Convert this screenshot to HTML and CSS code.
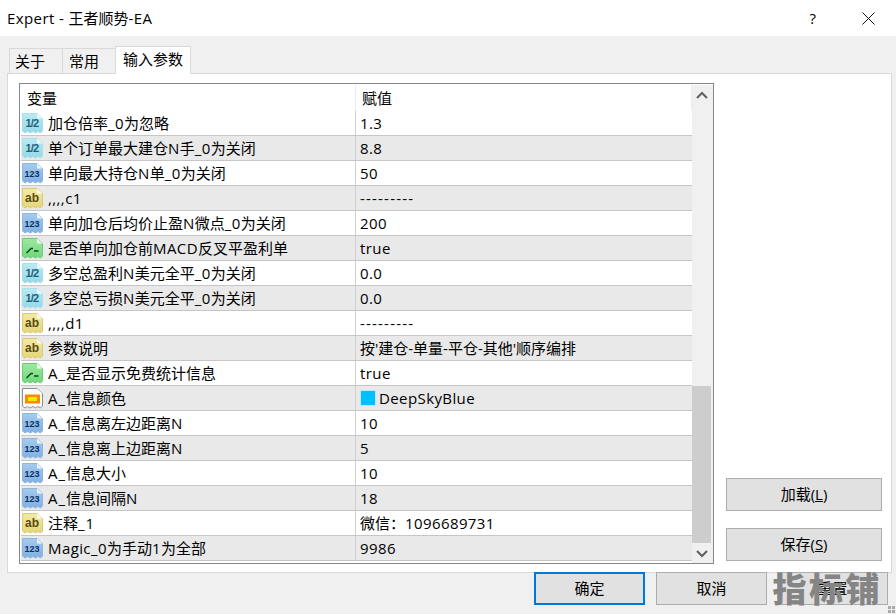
FILE: index.html
```html
<!DOCTYPE html>
<html lang="zh">
<head>
<meta charset="utf-8">
<title>Expert - 王者顺势-EA</title>
<link rel="stylesheet" href="styles.css">
</head>
<body>
<svg class="defs" width="0" height="0" aria-hidden="true">
  <defs>
    <linearGradient id="g-half" x1="0" y1="0" x2="0" y2="1"><stop offset="0" stop-color="#b9ebf3"/><stop offset="1" stop-color="#93d9e8"/></linearGradient>
    <linearGradient id="g-num" x1="0" y1="0" x2="0" y2="1"><stop offset="0" stop-color="#a5cbee"/><stop offset="1" stop-color="#7fb0e2"/></linearGradient>
    <linearGradient id="g-str" x1="0" y1="0" x2="0" y2="1"><stop offset="0" stop-color="#f3eaa4"/><stop offset="1" stop-color="#e4d67a"/></linearGradient>
    <linearGradient id="g-bool" x1="0" y1="0" x2="0" y2="1"><stop offset="0" stop-color="#9ee8a2"/><stop offset="1" stop-color="#6fd87a"/></linearGradient>
    <symbol id="doc" viewBox="0 0 21 21">
      <path class="doc-body" d="M.5.5H15L20.500 5.500V18L18.500 20L16 18.500L13.500 20L11 18.500L8 20L5.500 18.500L3 20L.5 18Z"/>
      <path class="doc-fold" d="M15 .5V5.500H20.500Z"/>
    </symbol>
  </defs>
</svg>
<div class="dialog">
  <header class="titlebar">
    <span class="title"><span class="en">Expert - </span>王者顺势<span class="en">-EA</span></span>
    <span class="help">?</span>
    <svg class="close" width="13" height="13" viewBox="0 0 13 13"><path d="M.5.500L12.500 12.500M12.500.500L.5 12.500"/></svg>
  </header>
  <div class="main">
    <nav class="tabs">
      <span class="tab">关于</span>
      <span class="tab">常用</span>
      <span class="tab active">输入参数</span>
    </nav>
    <section class="panel">
      <div class="list">
        <div class="table">
          <div class="row head"><span class="cell name">变量</span><span class="cell value">赋值</span></div>

          <div class="row"><span class="cell name"><span class="ic half"><svg><use href="#doc"/></svg><b>1/2</b></span>加仓倍率<span class="en">_0</span>为忽略</span><span class="cell value en">1.3</span></div>
          <div class="row alt"><span class="cell name"><span class="ic half"><svg><use href="#doc"/></svg><b>1/2</b></span>单个订单最大建仓<span class="en">N</span>手<span class="en">_0</span>为关闭</span><span class="cell value en">8.8</span></div>
          <div class="row"><span class="cell name"><span class="ic num"><svg><use href="#doc"/></svg><b>123</b></span>单向最大持仓<span class="en">N</span>单<span class="en">_0</span>为关闭</span><span class="cell value en">50</span></div>
          <div class="row alt"><span class="cell name"><span class="ic str"><svg><use href="#doc"/></svg><b>ab</b></span><span class="en">,,,,c1</span></span><span class="cell value dash">---------</span></div>
          <div class="row"><span class="cell name"><span class="ic num"><svg><use href="#doc"/></svg><b>123</b></span>单向加仓后均价止盈<span class="en">N</span>微点<span class="en">_0</span>为关闭</span><span class="cell value en">200</span></div>
          <div class="row alt"><span class="cell name"><span class="ic bool"><svg><use href="#doc"/><path class="sig" d="M4.500 15L9 10.500H11M12 13H16.500"/></svg></span>是否单向加仓前<span class="en">MACD</span>反叉平盈利单</span><span class="cell value en">true</span></div>
          <div class="row"><span class="cell name"><span class="ic half"><svg><use href="#doc"/></svg><b>1/2</b></span>多空总盈利<span class="en">N</span>美元全平<span class="en">_0</span>为关闭</span><span class="cell value en">0.0</span></div>
          <div class="row alt"><span class="cell name"><span class="ic half"><svg><use href="#doc"/></svg><b>1/2</b></span>多空总亏损<span class="en">N</span>美元全平<span class="en">_0</span>为关闭</span><span class="cell value en">0.0</span></div>
          <div class="row"><span class="cell name"><span class="ic str"><svg><use href="#doc"/></svg><b>ab</b></span><span class="en">,,,,d1</span></span><span class="cell value dash">---------</span></div>
          <div class="row alt"><span class="cell name"><span class="ic str"><svg><use href="#doc"/></svg><b>ab</b></span>参数说明</span><span class="cell value">按'建仓-单量-平仓-其他'顺序编排</span></div>
          <div class="row"><span class="cell name"><span class="ic bool"><svg><use href="#doc"/><path class="sig" d="M4.500 15L9 10.500H11M12 13H16.500"/></svg></span><span class="en-a">A_</span>是否显示免费统计信息</span><span class="cell value en">true</span></div>
          <div class="row alt"><span class="cell name"><span class="ic color"><svg><use href="#doc"/><rect class="grad-o" x="3" y="6.500" width="15" height="9"/><rect class="grad-y" x="6" y="9" width="9" height="4"/></svg></span><span class="en-a">A_</span>信息颜色</span><span class="cell value en"><i class="swatch"></i>DeepSkyBlue</span></div>
          <div class="row"><span class="cell name"><span class="ic num"><svg><use href="#doc"/></svg><b>123</b></span><span class="en-a">A_</span>信息离左边距离<span class="en">N</span></span><span class="cell value en">10</span></div>
          <div class="row alt"><span class="cell name"><span class="ic num"><svg><use href="#doc"/></svg><b>123</b></span><span class="en-a">A_</span>信息离上边距离<span class="en">N</span></span><span class="cell value en">5</span></div>
          <div class="row"><span class="cell name"><span class="ic num"><svg><use href="#doc"/></svg><b>123</b></span><span class="en-a">A_</span>信息大小</span><span class="cell value en">10</span></div>
          <div class="row alt"><span class="cell name"><span class="ic num"><svg><use href="#doc"/></svg><b>123</b></span><span class="en-a">A_</span>信息间隔<span class="en">N</span></span><span class="cell value en">18</span></div>
          <div class="row"><span class="cell name"><span class="ic str"><svg><use href="#doc"/></svg><b>ab</b></span>注释<span class="en-a">_1</span></span><span class="cell value">微信：<span class="en">1096689731</span></span></div>
          <div class="row alt"><span class="cell name"><span class="ic num"><svg><use href="#doc"/></svg><b>123</b></span><span class="en">Magic_0</span>为手动<span class="en">1</span>为全部</span><span class="cell value en">9986</span></div>
        </div>
        <div class="scrollbar">
          <svg class="arrow" width="20" height="20" viewBox="0 0 20 20"><path d="M5 13L10 8L15 13"/></svg>
          <div class="track"><div class="thumb"></div></div>
          <svg class="arrow" width="20" height="20" viewBox="0 0 20 20"><path d="M5 8L10 13L15 8"/></svg>
        </div>
      </div>
      <div class="side">
        <button class="btn wide">加载(<u>L</u>)</button>
        <button class="btn wide">保存(<u>S</u>)</button>
      </div>
    </section>
    <footer class="footer">
      <button class="btn foot primary">确定</button>
      <button class="btn foot">取消</button>
      <button class="btn foot">重置</button>
      <span class="watermark">指标铺</span>
      <span class="grip"></span>
    </footer>
  </div>
</div>
</body>
</html>
```

FILE: styles.css
```css
* { box-sizing: border-box; }
html, body { margin: 0; padding: 0; }
body {
  width: 896px;
  height: 614px;
  overflow: hidden;
  font-family: "Open Sans", "Noto Sans CJK SC", sans-serif;
  font-size: 15px;
  color: #000;
  background: #f0f0f0;
}
.defs { position: absolute; }
.dialog { display: flex; flex-direction: column; height: 614px; }
.en { letter-spacing: .4px; }
.en-a { letter-spacing: 1px; }
.dash { letter-spacing: 1.2px; }

.titlebar {
  height: 36px;
  flex: none;
  background: #fff;
  display: flex;
  align-items: center;
  padding: 0 21px 0 7px;
}
.title { font-size: 15px; line-height: 36px; flex: 1; }
.help { font-size: 15px; margin-right: 46px; }
.close { stroke: #111; stroke-width: 1; fill: none; }

.main { flex: 1; display: flex; flex-direction: column; padding: 0 4px 0 7px; position: relative; }

.tabs { display: flex; height: 37px; padding: 10px 0 0 2px; align-items: flex-end; flex: none; }
.tab {
  height: 25px;
  line-height: 24px;
  padding: 0 6px;
  background: #f0f0f0;
  border: 1px solid #d9d9d9;
  border-bottom: 0;
  margin-right: -1px;
  width: 54px;
}
.tab:first-child { padding-left: 5px; }
.tab.active {
  height: 28px;
  line-height: 25px;
  width: 76px;
  background: #fff;
  margin-bottom: -1px;
  position: relative;
  z-index: 1;
  padding: 0 7px;
}

.panel {
  height: 500px;
  flex: none;
  background: #fff;
  border: 1px solid #d9d9d9;
  display: flex;
  padding: 9px 9px 0 11px;
}

.list {
  width: 695px;
  height: 481px;
  flex: none;
  border: 1px solid #828790;
  display: flex;
  padding: 1px 0 0 1px;
}
.table { width: 671px; flex: none; }
.row { display: flex; height: 25px; border-bottom: 1px solid #c6c6c6; background: #fff; align-items: center; }
.row.alt { background: #e9e9e9; }
.row.head { height: 26px; border-bottom: 0; border-right: 1px solid #ececec; }
.cell { height: 100%; display: flex; align-items: center; white-space: nowrap; line-height: 23px; }
.name { width: 335px; padding-left: 1px; border-right: 1px solid #d0d0d0; }
.value { flex: 1; padding-left: 4px; }
.head .name { padding-left: 6px; border-right-color: #ececec; }
.head .value { padding-left: 6px; }

.ic { width: 21px; height: 21px; position: relative; flex: none; margin-right: 5px; display: block; letter-spacing: 0; }
.ic svg { width: 21px; height: 21px; display: block; overflow: visible; }
.ic b {
  position: absolute;
  left: 0;
  right: 1px;
  top: 4px;
  text-align: center;
  font-family: "Liberation Sans", sans-serif;
  line-height: 12px;
  font-weight: 700;
}
.doc-fold { fill: #fff; opacity: .8; }
.half { --body: url(#g-half); --edge: #a9e0ea; }
.half b { color: #24607c; font-size: 11px; letter-spacing: -.8px; }
.num { --body: url(#g-num); --edge: #8db8e4; }
.num b { color: #0f2f63; font-size: 9px; top: 5px; }
.str { --body: url(#g-str); --edge: #d9cb74; }
.str b { color: #5a4a12; font-size: 12px; }
.bool { --body: url(#g-bool); --edge: #6ccc78; }
.color { --body: #fbfbfb; --edge: #8f8f8f; }
.doc-body { fill: var(--body); stroke: var(--edge); stroke-width: 1; }
.sig { fill: none; stroke: #0d4a17; stroke-width: 1.500; }
.grad-o { fill: #ff8a00; }
.grad-y { fill: #ffe600; }

.swatch {
  width: 16px;
  height: 16px;
  background: #00bfff;
  border: 1px solid #bfe9fa;
  margin-right: 3px;
  display: block;
}

.scrollbar { width: 21px; flex: none; display: flex; flex-direction: column; background: #f0f0f0; height: 478px; }
.arrow { fill: none; stroke: #606060; stroke-width: 2; flex: none; }
.track { flex: 1; display: flex; flex-direction: column; justify-content: flex-end; }
.thumb { height: 157px; width: 19px; background: #cdcdcd; }

.side {
  flex: 1;
  display: flex;
  flex-direction: column;
  align-items: flex-end;
  gap: 17px;
  padding: 395px 0 0 0;
}
.btn {
  font-family: inherit;
  font-size: 15px;
  color: #000;
  background: #e1e1e1;
  border: 1px solid #adadad;
  padding: 0;
  height: 33px;
  line-height: 1;
}
.wide { width: 156px; }
.footer { height: 42px; display: flex; gap: 10px; justify-content: flex-end; padding-right: 4px; position: relative; margin-top: -1px; align-items: flex-start; }
.foot { width: 111px; }
.primary { border: 2px solid #0078d7; margin-right: 1px; }
.watermark {
  position: absolute;
  right: 10px;
  top: -3px;
  font-family: "Noto Sans CJK SC", sans-serif;
  font-weight: 900;
  font-size: 34px;
  line-height: 38px;
  color: #858585;
  letter-spacing: 2.500px;
}
.grip {
  position: absolute;
  right: -3px;
  bottom: 1px;
  width: 7px;
  height: 7px;
  background:
    repeating-linear-gradient(0deg, transparent 0 3px, #f0f0f0 3px 4px),
    repeating-linear-gradient(90deg, #aaa 0 3px, transparent 3px 4px);
}
```
